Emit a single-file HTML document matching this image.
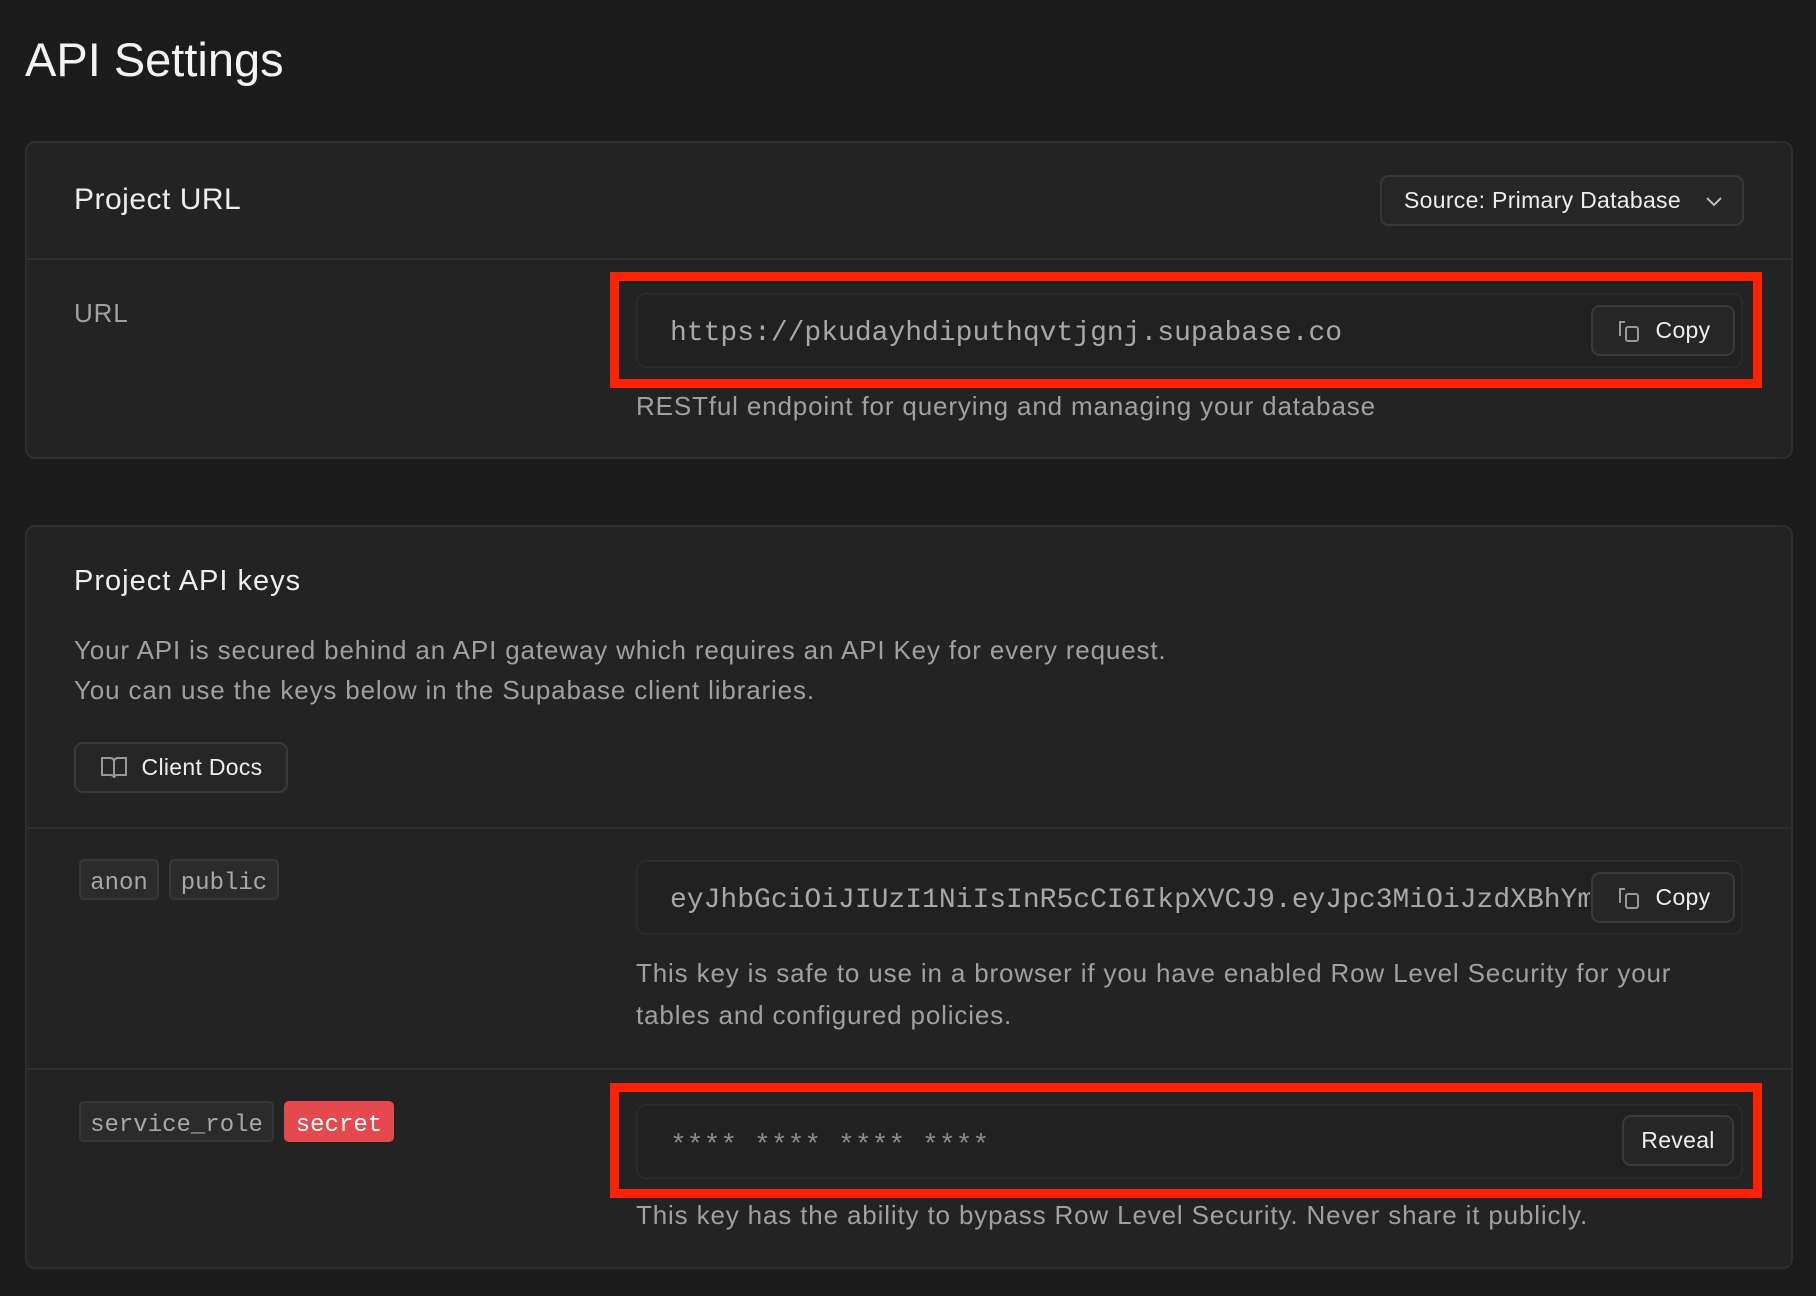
<!DOCTYPE html>
<html><head><meta charset="utf-8"><style>
*{box-sizing:border-box;margin:0;padding:0}
body{width:1816px;height:1296px;background:#1c1c1c;font-family:"Liberation Sans",sans-serif;color:#ededed;position:relative;overflow:hidden}
.a{position:absolute;white-space:nowrap}
.card{position:absolute;left:25px;width:1768px;background:#232323;border:2px solid #2e2e2e;border-radius:10px}
.div{position:absolute;left:25px;width:1768px;height:2px;background:#2e2e2e}
.mono{font-family:"Liberation Mono",monospace}
.inp{position:absolute;left:636px;width:1107px;height:75px;border:2px solid #2a2a2a;background:#212121;border-radius:10px}
.btn{position:absolute;border:2px solid #3a3a3a;background:#262626;border-radius:9px;color:#ededed;font-size:23px;display:flex;align-items:center;justify-content:center;gap:14px;letter-spacing:0.3px}
.red{position:absolute;border:9px solid #ff2200}
.sec{color:#a0a0a0;font-size:26px;letter-spacing:0.85px}
.badge{position:absolute;height:41px;border:2px solid #363636;background:#2b2b2b;border-radius:5px;color:#a8a8a8;font-family:"Liberation Mono",monospace;font-size:24px;display:flex;align-items:center;justify-content:center;padding-top:7px}
</style></head><body>
<div class="a" style="left:25px;top:32px;font-size:47px;color:#f4f4f4">API Settings</div>

<div class="card" style="top:141px;height:318px"></div>
<div class="div" style="top:258px"></div>
<div class="a" style="left:74px;top:183px;font-size:30px;letter-spacing:0.5px">Project URL</div>
<div class="btn" style="left:1380px;top:175px;width:364px;height:51px;border-color:#383838;font-size:23px;justify-content:flex-start;padding-left:22px">Source: Primary Database
<svg width="18" height="12" style="margin-left:10px" viewBox="0 0 18 12"><path d="M2 3l7 7 7-7" stroke="#bbb" stroke-width="2" fill="none"/></svg></div>
<div class="a sec" style="left:74px;top:298px;font-size:26px">URL</div>
<div class="inp" style="top:293px"></div>
<div class="a mono" style="left:670px;top:318px;font-size:28px;color:#a8a8a8">https://pkudayhdiputhqvtjgnj.supabase.co</div>
<div class="btn" style="left:1591px;top:305px;width:144px;height:51px">
<svg width="26" height="26" viewBox="0 0 26 26"><path d="M9 4H4v14" stroke="#999" stroke-width="2" fill="none"/><rect x="10" y="9" width="12" height="14" rx="2" stroke="#999" stroke-width="2" fill="none"/></svg>Copy</div>
<div class="red" style="left:610px;top:272px;width:1152px;height:116px"></div>
<div class="a sec" style="left:636px;top:391px">RESTful endpoint for querying and managing your database</div>

<div class="card" style="top:525px;height:744px"></div>
<div class="a" style="left:74px;top:565px;font-size:29px;letter-spacing:1px">Project API keys</div>
<div class="a sec" style="left:74px;top:630px;line-height:40px">Your API is secured behind an API gateway which requires an API Key for every request.<br>You can use the keys below in the Supabase client libraries.</div>
<div class="btn" style="left:74px;top:742px;width:214px;height:51px">
<svg width="28" height="26" viewBox="0 0 28 26"><path d="M2 3h8q4 0 4 4v16q0-3-4-3H2zM26 3h-8q-4 0-4 4v16q0-3 4-3h8z" stroke="#999" stroke-width="2" fill="none"/></svg>Client Docs</div>
<div class="div" style="top:827px"></div>
<div class="badge" style="left:79px;top:859px;width:80px">anon</div>
<div class="badge" style="left:169px;top:859px;width:110px">public</div>
<div class="inp" style="top:860px;overflow:hidden"><div class="mono" style="position:absolute;left:32px;top:23px;font-size:28px;color:#a8a8a8;white-space:nowrap;width:920px;overflow:hidden">eyJhbGciOiJIUzI1NiIsInR5cCI6IkpXVCJ9.eyJpc3MiOiJzdXBhYmFzZSIsInJlZiI6</div></div>
<div class="btn" style="left:1591px;top:872px;width:144px;height:51px">
<svg width="26" height="26" viewBox="0 0 26 26"><path d="M9 4H4v14" stroke="#999" stroke-width="2" fill="none"/><rect x="10" y="9" width="12" height="14" rx="2" stroke="#999" stroke-width="2" fill="none"/></svg>Copy</div>
<div class="a sec" style="left:636px;top:952px;line-height:42px">This key is safe to use in a browser if you have enabled Row Level Security for your<br>tables and configured policies.</div>
<div class="div" style="top:1068px"></div>
<div class="badge" style="left:79px;top:1101px;width:195px">service_role</div>
<div class="badge" style="left:284px;top:1101px;width:110px;background:#e5484d;border-color:#e5484d;color:#fff">secret</div>
<div class="inp" style="top:1104px"></div>
<div class="a mono" style="left:670px;top:1131px;font-size:28px;color:#8a8a8a">**** **** **** ****</div>
<div class="btn" style="left:1622px;top:1115px;width:112px;height:51px">Reveal</div>
<div class="red" style="left:610px;top:1083px;width:1152px;height:115px"></div>
<div class="a sec" style="left:636px;top:1200px">This key has the ability to bypass Row Level Security. Never share it publicly.</div>
</body></html>
